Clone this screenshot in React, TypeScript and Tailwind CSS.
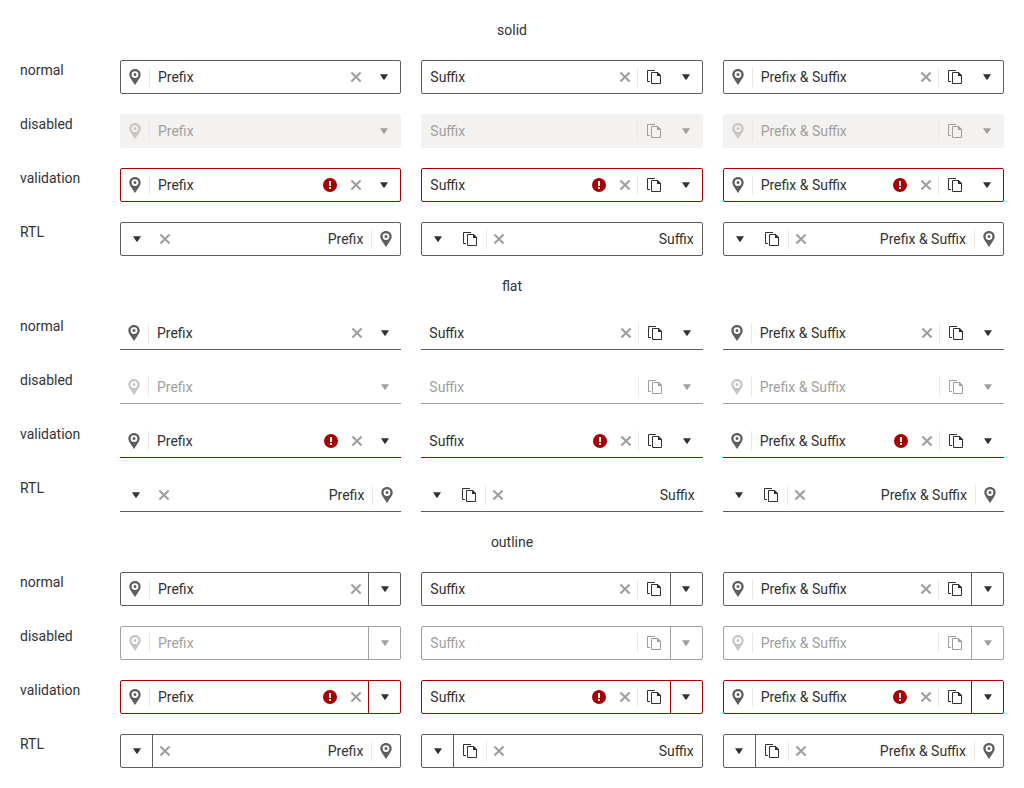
import clsx from "clsx";

type Variant = "solid" | "flat" | "outline";
type State = "normal" | "disabled" | "validation" | "RTL";

interface FieldProps {
  text: string;
  prefix?: boolean;
  suffix?: boolean;
  variant: Variant;
  state: State;
}

function PinIcon() {
  return (
    <svg width="16" height="16" viewBox="0 0 16 16" fill="currentColor">
      <path
        fillRule="evenodd"
        d="M8 0C4.8 0 2.3 2.4 2.3 5.6C2.3 7.2 3 8.6 4 10L8 16L12 10C13 8.6 13.7 7.2 13.7 5.6C13.7 2.4 11.2 0 8 0ZM8 2.2A3.4 3.4 0 1 1 8 9A3.4 3.4 0 1 1 8 2.2ZM8 4.1A1.5 1.5 0 1 0 8 7.1A1.5 1.5 0 1 0 8 4.1Z"
      />
    </svg>
  );
}

function CopyIcon() {
  return (
    <svg width="16" height="16" viewBox="0 0 16 16" fill="none" stroke="currentColor">
      <path d="M9 1.5H1.5V12.5H4" />
      <path d="M5.5 3.5H11.5L14.5 6.5V14.5H5.5Z" />
      <path d="M11 3H11.7L15 6.3V7H11Z" fill="currentColor" stroke="none" />
    </svg>
  );
}

function ClearIcon() {
  return (
    <svg width="12" height="12" viewBox="0 0 12 12" fill="none" stroke="currentColor" strokeWidth="2.1">
      <path d="M1.4 1.4L10.6 10.6M10.6 1.4L1.4 10.6" />
    </svg>
  );
}

function ArrowIcon() {
  return (
    <svg width="8" height="6" viewBox="0 0 8 6" fill="currentColor">
      <path d="M0 0.2H8L4.4 5.8H3.6Z" />
    </svg>
  );
}

function Field({ text, prefix, suffix, variant, state }: FieldProps) {
  const disabled = state === "disabled";
  const invalid = state === "validation";
  const line = invalid ? "border-[#a80000]" : disabled ? "border-[#a19f9d]" : "border-[#605e5c]";

  return (
    <div
      dir={state === "RTL" ? "rtl" : "ltr"}
      className={clsx(
        "flex h-[34px] items-center",
        variant === "flat" ? "border-b pt-px" : "rounded-[2px] border",
        disabled && variant === "solid" ? "border-transparent bg-[#f3f2f1]" : line,
        disabled ? "text-[#a19f9d]" : "text-[#323130]",
      )}
    >
      {prefix && (
        <div
          className={clsx(
            "flex h-5 w-[29px] shrink-0 items-center justify-center border-e border-e-[#e9e8e7]",
            disabled ? "text-[#c8c6c4]" : "text-[#605e5c]",
          )}
        >
          <PinIcon />
        </div>
      )}
      <div className="min-w-0 flex-1 px-2 leading-5">{text}</div>
      {invalid && (
        <div className="flex w-7 shrink-0 justify-center">
          <svg width="14" height="14" viewBox="0 0 14 14">
            <circle cx="7" cy="7" r="7" fill="#a80000" />
            <path d="M6 3H8V8H6ZM6 9H8V11H6Z" fill="#fff" />
          </svg>
        </div>
      )}
      {!disabled && (
        <div className="flex w-6 shrink-0 justify-center text-[#a19f9d]">
          <ClearIcon />
        </div>
      )}
      {suffix && (
        <div className="flex h-5 w-[33px] shrink-0 items-center justify-center border-s border-s-[#e9e8e7]">
          <CopyIcon />
        </div>
      )}
      <div
        className={clsx(
          "flex w-8 shrink-0 items-center justify-center self-stretch",
          variant === "outline" && ["border-s", line],
        )}
      >
        <ArrowIcon />
      </div>
    </div>
  );
}

const variants: Variant[] = ["solid", "flat", "outline"];
const states: State[] = ["normal", "disabled", "validation", "RTL"];

export default function App() {
  return (
    <main className="flex h-[788px] flex-col gap-5 bg-white p-5 font-['Roboto',sans-serif] text-sm leading-5 text-[#333]">
      {variants.map((variant) => (
        <section key={variant} className="flex flex-col gap-5">
          <h2 className="text-center">{variant}</h2>
          {states.map((state) => (
            <div key={state} className="flex">
              <div className="w-[100px] shrink-0">{state}</div>
              <div className="grid flex-1 grid-cols-3 gap-5">
                <Field text="Prefix" prefix variant={variant} state={state} />
                <Field text="Suffix" suffix variant={variant} state={state} />
                <Field text="Prefix & Suffix" prefix suffix variant={variant} state={state} />
              </div>
            </div>
          ))}
        </section>
      ))}
    </main>
  );
}
